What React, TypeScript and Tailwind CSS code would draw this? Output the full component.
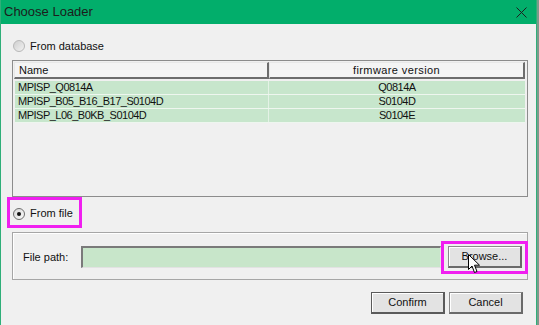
import React from 'react';

const rows = [
  { name: 'MPISP_Q0814A', version: 'Q0814A' },
  { name: 'MPISP_B05_B16_B17_S0104D', version: 'S0104D' },
  { name: 'MPISP_L06_B0KB_S0104D', version: 'S0104E' },
];

function Radio({ checked }: { checked?: boolean }) {
  return (
    <span
      className={
        'flex h-[12px] w-[12px] shrink-0 items-center justify-center rounded-full border bg-gradient-to-br ' +
        (checked ? 'border-[#6e6e6e] from-[#d8d8d8] to-[#fafafa]' : 'border-[#b8b8b8] from-[#cfcfcf] to-[#f2f2f2]')
      }
    >
      {checked && <span className="h-[4px] w-[4px] rounded-full bg-[#111]" />}
    </span>
  );
}

function Button({ label, primary }: { label: string; primary?: boolean }) {
  return (
    <button
      className={
        'flex h-[22px] w-[74px] shrink-0 items-center justify-center bg-[#e3e3e3] text-[11px] text-[#111] shadow-[inset_1px_1px_0_#ffffff] ' +
        (primary
          ? 'border border-b-2 border-r-2 border-[#5a5a5a]'
          : 'border border-b-2 border-r-2 border-[#8a8a8a] border-b-[#6a6a6a] border-r-[#6a6a6a]')
      }
    >
      {label}
    </button>
  );
}

export default function App() {
  return (
    <div className="flex h-[325px] w-[539px] overflow-hidden bg-[#7b9a8b] font-['Liberation_Sans',Arial,sans-serif] text-[11px] text-[#111]">
      <div className="relative flex h-full w-[537px] flex-col border-x border-[#2faf79] bg-[#f0f0f0]">
        {/* title bar */}
        <div className="flex h-[24px] shrink-0 items-center justify-between bg-[#02ae6b] pl-[3px] pr-[9px]">
          <span className="text-[13px] text-[#1c1c1c]">Choose Loader</span>
          <svg width="11" height="11" viewBox="0 0 11 11">
            <path d="M0.5 0.5 L10.5 10.5 M10.5 0.5 L0.5 10.5" stroke="#1e1e1e" strokeWidth="1" />
          </svg>
        </div>

        <div className="flex flex-col pl-[11px] pr-[7px]">
          {/* from database */}
          <div className="mt-[14px] flex h-[16px] items-center gap-[5px] pl-[1px]">
            <Radio />
            <span>From database</span>
          </div>

          {/* list */}
          <div className="mt-[6px] flex h-[137px] w-[516px] flex-col border border-[#8c8c8c] bg-[#f0f0f0] p-[1px] pr-[2px]">
            <div className="flex h-[17px] shrink-0">
              <div className="flex w-[255px] items-center border-l border-t border-[#e8e8e8] border-b-2 border-r-2 border-b-[#6d6d6d] border-r-[#6d6d6d] bg-[#f4f4f4] pl-[4px]">
                Name
              </div>
              <div className="flex flex-1 items-center justify-center border-l border-t border-[#e8e8e8] border-b-2 border-r-2 border-b-[#6d6d6d] border-r-[#6d6d6d] bg-[#f4f4f4] tracking-[0.4px]">
                firmware version
              </div>
            </div>
            <div className="ml-[1px] mt-[2px] flex flex-col">
              {rows.map((r) => (
                <div key={r.name} className="flex h-[14px] border-b border-[#eef6ef] bg-[#c7e6cc] leading-[13px]">
                  <div className="w-[254px] border-r border-[#e4f2e6] pl-[3px] tracking-[-0.5px]">{r.name}</div>
                  <div className="flex-1 text-center tracking-[-0.5px]">{r.version}</div>
                </div>
              ))}
            </div>
          </div>

          {/* from file */}
          <div className="-ml-[5px] flex h-[31px] w-[75px] items-center gap-[5px] border-[3px] border-[#f01ff0] pl-[3px] pt-[2px]">
            <Radio checked />
            <span>From file</span>
          </div>

          {/* file group */}
          <div className="mt-[4px] flex h-[48px] w-[516px] items-center border border-[#a6a6a6] pl-[10px] pt-[2px] shadow-[inset_1px_1px_0_#ffffff]">
            <span className="w-[58px] shrink-0">File path:</span>
            <div className="h-[22px] w-[360px] shrink-0 border border-l-2 border-t-2 border-[#e2e2e2] border-l-[#7a7a7a] border-t-[#7a7a7a] bg-[#c8e6ca]" />
            <div className="relative flex h-[33px] w-[87px] shrink-0 items-center border-[3px] border-[#f01ff0] pl-[4px]">
              <Button label="Browse..." />
              <svg className="absolute left-[24px] top-[10px]" width="13" height="20" viewBox="0 0 13 20">
                <path
                  d="M0.5 0.5 L0.5 15.5 L4 12 L6.5 18.5 L9 17.5 L6.5 11.2 L11.5 11.2 Z"
                  fill="#ffffff"
                  stroke="#000000"
                  strokeWidth="1"
                  strokeLinejoin="round"
                />
              </svg>
            </div>
          </div>

          {/* actions */}
          <div className="mr-[6px] mt-[12px] flex justify-end gap-[4px]">
            <Button label="Confirm" primary />
            <Button label="Cancel" />
          </div>
        </div>
      </div>
    </div>
  );
}
